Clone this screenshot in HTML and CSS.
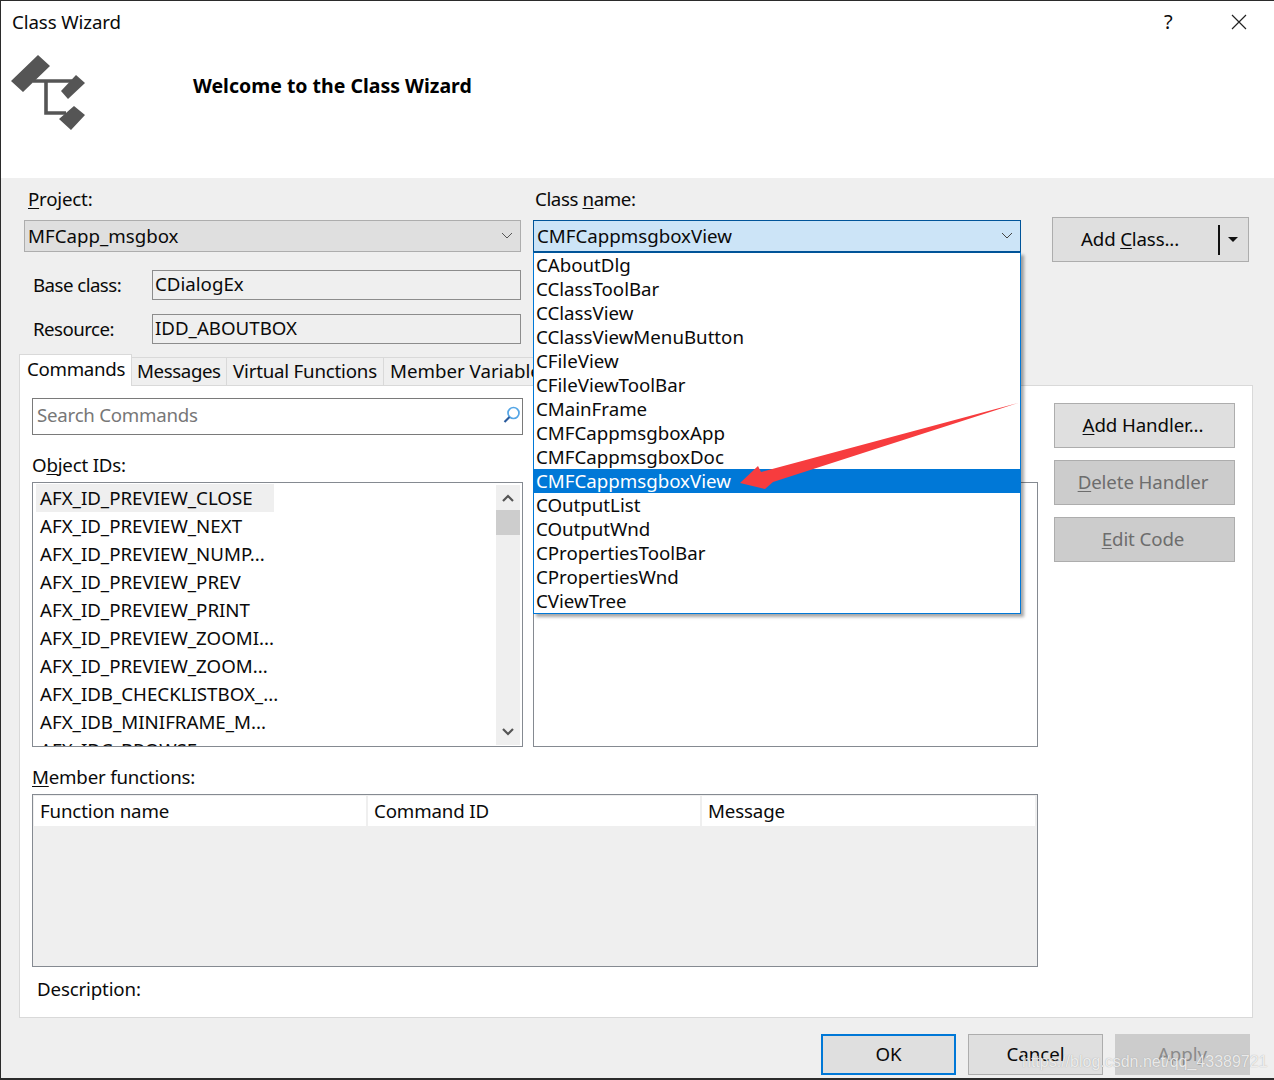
FILE: index.html
```html
<!DOCTYPE html>
<html lang="en">
<head>
<meta charset="utf-8">
<title>Class Wizard</title>
<link rel="stylesheet" href="styles.css">
</head>
<body>
<div class="window">
  <header class="header">
    <div class="titlebar">
      <span class="title">Class Wizard</span>
      <span class="help">?</span>
      <svg class="close" width="16" height="16" viewBox="0 0 16 16"><path d="M1 1L15 15M15 1L1 15" stroke="#222" stroke-width="1.2" fill="none"/></svg>
    </div>
    <div class="welcome">
      <svg class="logo" width="90" height="90" viewBox="0 50 90 90">
        <path d="M38 55L50 66L23 92L11 81Z M76 75L85 83L68 99L61 91Z M74 106L85 115L71 130L59 119Z" fill="#555"/>
        <path d="M33 81H72M46 81V113H66" stroke="#555" stroke-width="3.6" fill="none"/>
      </svg>
      <h1 class="heading">Welcome to the Class Wizard</h1>
    </div>
  </header>

  <section class="top">
    <div class="top-left">
      <label class="label project-label"><u>P</u>roject:</label>
      <div class="combo combo-off"><span>MFCapp_msgbox</span><svg class="chev" width="12" height="8" viewBox="0 0 12 8"><path d="M1 1L6 6L11 1" stroke="#555" fill="none"/></svg></div>
      <div class="field-row"><span class="field-label">Base class:</span><div class="field">CDialogEx</div></div>
      <div class="field-row"><span class="field-label">Resource:</span><div class="field">IDD_ABOUTBOX</div></div>
    </div>
    <div class="top-mid">
      <label class="label class-label">Class <u>n</u>ame:</label>
      <div class="combo combo-on"><span>CMFCappmsgboxView</span><svg class="chev" width="12" height="8" viewBox="0 0 12 8"><path d="M1 1L6 6L11 1" stroke="#444" fill="none"/></svg></div>
    </div>
    <div class="top-right">
      <div class="btn split"><span class="split-text">Add <u>C</u>lass...</span><span class="split-bar"></span><span class="caret"></span></div>
    </div>
  </section>

  <nav class="tabs">
    <div class="tab tab-on">Commands</div>
    <div class="tab tab-msg">Messages</div>
    <div class="tab tab-virt">Virtual Functions</div>
    <div class="tab tab-mem">Member Variables</div>
  </nav>

  <section class="panel">
    <div class="panel-grid">
      <div class="col-left">
        <div class="search"><span>Search Commands</span>
          <svg class="search-icon" width="20" height="20" viewBox="0 0 20 20"><circle cx="11.5" cy="8" r="5.5" stroke="#55a6e6" stroke-width="1.7" fill="none"/><path d="M7.5 12L2.5 17" stroke="#2a5a9c" stroke-width="2.2"/></svg>
        </div>
        <label class="label ids-label">O<u>b</u>ject IDs:</label>
        <div class="listbox">
          <ul class="ids">
            <li class="id-on">AFX_ID_PREVIEW_CLOSE</li>
            <li>AFX_ID_PREVIEW_NEXT</li>
            <li>AFX_ID_PREVIEW_NUMP...</li>
            <li>AFX_ID_PREVIEW_PREV</li>
            <li>AFX_ID_PREVIEW_PRINT</li>
            <li>AFX_ID_PREVIEW_ZOOMI...</li>
            <li>AFX_ID_PREVIEW_ZOOM...</li>
            <li>AFX_IDB_CHECKLISTBOX_...</li>
            <li>AFX_IDB_MINIFRAME_M...</li>
            <li>AFX_IDC_BROWSE</li>
          </ul>
          <div class="scrollbar">
            <svg class="scroll-arrow" width="14" height="10" viewBox="0 0 14 10"><path d="M2 8L7 3L12 8" stroke="#555" stroke-width="2.2" fill="none"/></svg>
            <div class="thumb"></div>
            <svg class="scroll-arrow down" width="14" height="10" viewBox="0 0 14 10"><path d="M2 2L7 7L12 2" stroke="#555" stroke-width="2.2" fill="none"/></svg>
          </div>
        </div>
      </div>
      <div class="col-mid"><div class="handlers"></div></div>
      <div class="col-right">
        <div class="btn side"><span><u>A</u>dd Handler...</span></div>
        <div class="btn side off"><span><u>D</u>elete Handler</span></div>
        <div class="btn side off"><span><u>E</u>dit Code</span></div>
      </div>
    </div>
    <label class="label mem-label"><u>M</u>ember functions:</label>
    <div class="table">
      <div class="thead">
        <div class="th th-a">Function name</div>
        <div class="th th-b">Command ID</div>
        <div class="th th-c">Message</div>
      </div>
    </div>
    <div class="desc">Description:</div>
  </section>

  <footer class="footer">
    <div class="btn foot ok">OK</div>
    <div class="btn foot">Cancel</div>
    <div class="btn foot off2">Apply</div>
  </footer>

  <ul class="dropdown">
    <li>CAboutDlg</li>
    <li>CClassToolBar</li>
    <li>CClassView</li>
    <li>CClassViewMenuButton</li>
    <li>CFileView</li>
    <li>CFileViewToolBar</li>
    <li>CMainFrame</li>
    <li>CMFCappmsgboxApp</li>
    <li>CMFCappmsgboxDoc</li>
    <li class="drop-on">CMFCappmsgboxView</li>
    <li>COutputList</li>
    <li>COutputWnd</li>
    <li>CPropertiesToolBar</li>
    <li>CPropertiesWnd</li>
    <li>CViewTree</li>
  </ul>

  <svg class="arrow" width="1274" height="1080" viewBox="0 0 1274 1080"><polygon points="740,483 758,466 761,472 1018,403 773,482 765,489" fill="#f73c3e"/></svg>
  <div class="watermark">https://blog.csdn.net/qq_43389721</div>
</div>
</body>
</html>
```
FILE: styles.css
```css
* { box-sizing: border-box; }
html, body { margin: 0; padding: 0; background: #fff; }
body { font-family: "Noto Sans", "Open Sans", sans-serif; font-size: 18.7px; color: #0a0a0a; }
ul { list-style: none; margin: 0; padding: 0; }
u { text-underline-offset: 2px; text-decoration-thickness: 1px; }

.window { position: relative; width: 1274px; height: 1080px; overflow: hidden; background: #efefef; border-style: solid; border-color: #2b2b2b; border-width: 1px 0 2px 1px; display: flex; flex-direction: column; }

.header { height: 177px; background: #fff; flex: none; }
.titlebar { height: 44px; display: flex; align-items: center; padding: 0 27px 2px 11px; }
.title { flex: 1; line-height: 42px; letter-spacing: -.1px; }
.help { width: 16px; margin-right: 51px; font-size: 20px; line-height: 42px; }
.welcome { display: flex; align-items: flex-start; }
.logo { flex: none; margin: 5px 0 0 -1px; }
.heading { margin: 26px 0 0 103px; font-size: 19.5px; line-height: 30px; font-weight: 700; color: #000; }

.top { height: 175px; display: flex; padding: 0 0 0 23px; flex: none; }
.label { display: block; line-height: 26px; letter-spacing: -.2px; }
.top-left { width: 497px; }
.project-label { margin: 8px 0 8px 4px; height: 26px; }
.combo { height: 32px; display: flex; align-items: center; justify-content: space-between; padding: 0 7px 2px 3px; border: 1px solid #adadad; background: #dfdfdf; }
.chev { margin-top: 2px; }
.combo-on { background: #cce4f7; border-color: #005499; padding-left: 3px; }
.field-row { display: flex; align-items: center; height: 30px; margin-top: 18px; }
.field-row + .field-row { margin-top: 14px; }
.field-label { width: 128px; padding: 0 0 2px 9px; letter-spacing: -.55px; }
.field { flex: 1; height: 30px; line-height: 26px; padding-left: 2px; border: 1px solid #8c8c8c; background: #efefef; letter-spacing: 0; }
.top-mid { width: 488px; margin-left: 12px; }
.class-label { margin: 8px 0 8px 2px; height: 26px; letter-spacing: -.4px; }
.top-right { margin-left: 31px; padding-top: 39px; }
.btn { display: flex; align-items: center; justify-content: center; border: 1px solid #adadad; background: #dfdfdf; padding-bottom: 2px; }
.split { width: 197px; height: 45px; padding-left: 28px; justify-content: flex-start; padding-bottom: 0; }
.split-text { width: 137px; padding-bottom: 2px; letter-spacing: -.15px; }
.split-bar { width: 2px; height: 30px; background: #111; }
.caret { margin-left: 8px; border: 5px solid transparent; border-top-color: #111; border-bottom-width: 0; }

.tabs { display: flex; align-items: flex-end; height: 32px; padding-left: 18px; flex: none; }
.tab { height: 28px; line-height: 25px; background: #efefef; border: solid #d9d9d9; border-width: 1px 1px 0 0; white-space: nowrap; }
.tab-on { width: 113px; height: 32px; line-height: 28px; background: #fff; border-left-width: 1px; position: relative; z-index: 1; margin-bottom: -1px; padding-left: 7px; letter-spacing: -.3px; }
.tab-msg { width: 95px; padding-left: 5px; letter-spacing: -.4px; }
.tab-virt { width: 157px; padding-left: 6px; letter-spacing: -.2px; }
.tab-mem { width: 170px; padding-left: 6px; }

.panel { width: 1234px; height: 633px; margin-left: 18px; background: #fff; border: 1px solid #d9d9d9; padding: 12px 0 0 12px; flex: none; }
.panel-grid { display: flex; height: 349px; }
.col-left { width: 491px; }
.search { position: relative; height: 37px; line-height: 31px; padding-left: 4px; border: 1px solid #7a7a7a; color: #777; letter-spacing: -.25px; }
.search-icon { position: absolute; right: 0; top: 6px; }
.ids-label { margin: 17px 0 4px; line-height: 26px; height: 26px; }
.listbox { position: relative; height: 265px; border: 1px solid #858a91; overflow: hidden; padding: 1px 0 0 3px; }
.ids li { height: 28px; line-height: 28px; padding-left: 4px; white-space: nowrap; }
.ids .id-on { width: 238px; background: #efefef; }
.scrollbar { position: absolute; right: 2px; top: 2px; bottom: 1px; width: 24px; background: #efefef; display: flex; flex-direction: column; align-items: center; }
.scroll-arrow { margin-top: 8px; flex: none; }
.scroll-arrow.down { margin: auto 0 8px; }
.thumb { width: 24px; height: 25px; margin-top: 7px; background: #cdcdcd; }
.col-mid { width: 505px; margin-left: 10px; padding-top: 84px; }
.handlers { height: 265px; border: 1px solid #858a91; }
.col-right { margin-left: 16px; margin-top: 5px; display: flex; flex-direction: column; gap: 12px; letter-spacing: -.1px; }
.side { width: 181px; height: 45px; padding-right: 3px; }
.side.off { background: #ccc; color: #6d6d6d; }
.mem-label { margin-top: 17px; }
.table { width: 1006px; height: 173px; margin-top: 4px; border: 1px solid #858a91; background: #efefef; padding: 1px 2px 0 1px; }
.thead { display: flex; height: 30px; background: #fff; letter-spacing: -.15px; }
.th { line-height: 30px; padding-left: 6px; border-right: 2px solid #efefef; }
.th-a { width: 334px; }
.th-b { width: 334px; }
.th-c { flex: 1; border-right: 0; }
.desc { margin: 9px 0 0 5px; line-height: 26px; letter-spacing: -.15px; }

.footer { display: flex; justify-content: flex-end; gap: 12px; padding: 16px 24px 0 0; }
.foot { width: 135px; height: 41px; }
.ok { border: 2px solid #0078d7; }
.off2 { background: #ccc; color: #8a8a8a; border-color: #ccc; }

.dropdown { position: absolute; left: 532px; top: 251px; width: 488px; height: 362px; background: #fff; border: 1px solid #0078d7; border-top-color: #005499; box-shadow: 3px 3px 3px rgba(0,0,0,.35); }
.dropdown li { height: 24px; line-height: 23px; padding-left: 2px; }
.dropdown .drop-on { background: #0078d7; color: #fff; }

.arrow { position: absolute; left: -1px; top: -1px; pointer-events: none; }
.watermark { position: absolute; left: 1021px; top: 1050px; font-family: "Liberation Sans", Arial, sans-serif; font-size: 16px; line-height: 22px; color: rgba(255,255,255,.8); text-shadow: 0 0 1px rgba(110,110,110,.6); white-space: nowrap; }
```
